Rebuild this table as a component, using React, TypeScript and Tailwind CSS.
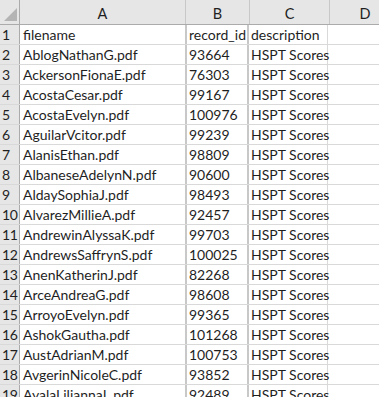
const rows: [string, string, string][] = [
  ["filename", "record_id", "description"],
  ["AblogNathanG.pdf", "93664", "HSPT Scores"],
  ["AckersonFionaE.pdf", "76303", "HSPT Scores"],
  ["AcostaCesar.pdf", "99167", "HSPT Scores"],
  ["AcostaEvelyn.pdf", "100976", "HSPT Scores"],
  ["AguilarVcitor.pdf", "99239", "HSPT Scores"],
  ["AlanisEthan.pdf", "98809", "HSPT Scores"],
  ["AlbaneseAdelynN.pdf", "90600", "HSPT Scores"],
  ["AldaySophiaJ.pdf", "98493", "HSPT Scores"],
  ["AlvarezMillieA.pdf", "92457", "HSPT Scores"],
  ["AndrewinAlyssaK.pdf", "99703", "HSPT Scores"],
  ["AndrewsSaffrynS.pdf", "100025", "HSPT Scores"],
  ["AnenKatherinJ.pdf", "82268", "HSPT Scores"],
  ["ArceAndreaG.pdf", "98608", "HSPT Scores"],
  ["ArroyoEvelyn.pdf", "99365", "HSPT Scores"],
  ["AshokGautha.pdf", "101268", "HSPT Scores"],
  ["AustAdrianM.pdf", "100753", "HSPT Scores"],
  ["AvgerinNicoleC.pdf", "93852", "HSPT Scores"],
  ["AyalaLiliannaL.pdf", "92489", "HSPT Scores"],
];

export default function App() {
  return (
    <div className="w-[379px] h-[397px] overflow-hidden bg-white text-[14px] text-[#1f1f1f] font-['Lato','Liberation_Sans',sans-serif]">
      {/* column headers */}
      <div className="flex h-[25px] bg-[#e6e6e6] border-b border-[#ababab] text-[14.5px]">
        <div className="w-[20px] shrink-0 border-r border-[#ababab] flex items-end justify-end pr-[2px] pb-[3px]">
          <div className="w-0 h-0 border-l-[13px] border-l-transparent border-b-[13px] border-b-[#b4b4b4]" />
        </div>
        <div className="w-[166px] shrink-0 border-r border-[#c8c8c8] flex items-center justify-center pt-[3px]">A</div>
        <div className="w-[64px] shrink-0 border-r border-[#c8c8c8] flex items-center justify-center pt-[3px]">B</div>
        <div className="w-[80px] shrink-0 border-r border-[#c8c8c8] flex items-center justify-center pt-[3px]">C</div>
        <div className="w-[70px] shrink-0 flex items-center justify-center pt-[3px]">D</div>
      </div>

      {rows.map((r, i) => (
        <div key={i} className="flex h-[20px] border-b border-[#d9d9d9]">
          <div className="w-[20px] shrink-0 bg-[#e6e6e6] border-r border-[#ababab] flex items-center pl-[2px] leading-none tracking-[-0.3px]">
            {i + 1}
          </div>
          <div className="w-[166px] shrink-0 border-r border-[#d9d9d9] flex items-center pl-[3px] leading-none whitespace-nowrap">
            {r[0]}
          </div>
          <div className="w-[64px] shrink-0 border-x-2 border-[#c8c8c8] -ml-px flex items-center pl-[2px] leading-none whitespace-nowrap">
            {r[1]}
          </div>
          <div className="w-[80px] shrink-0 border-r border-[#d9d9d9] -ml-px flex items-center pl-[3px] leading-none whitespace-nowrap">
            {r[2]}
          </div>
          <div className="w-[70px] shrink-0" />
        </div>
      ))}
    </div>
  );
}
